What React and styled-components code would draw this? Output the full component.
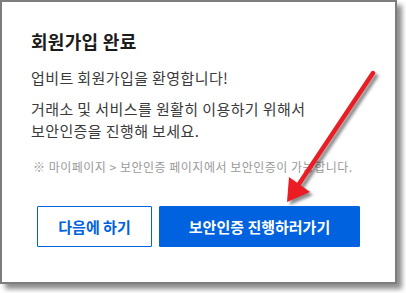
import styled, { createGlobalStyle } from 'styled-components';

const GlobalStyle = createGlobalStyle`
  html, body {
    margin: 0;
    padding: 0;
    background: #fff;
  }
  body {
    font-family: "Noto Sans CJK KR", "Noto Sans", sans-serif;
  }
`;

const Page = styled.div`
  position: relative;
  width: 406px;
  height: 293px;
  overflow: hidden;
`;

const Dialog = styled.div`
  box-sizing: border-box;
  width: 397px;
  height: 284px;
  border: 2px solid #7d7d7d;
  background: #fff;
  box-shadow: 5px 5px 5px rgba(0, 0, 0, 0.45);
  padding: 26px 29px 0;
  display: flex;
  flex-direction: column;
`;

const Title = styled.h2`
  margin: 0;
  font-size: 18px;
  line-height: 26px;
  font-weight: 700;
  color: #1b1b1b;
  letter-spacing: 0.3px;
`;

const Text = styled.p`
  margin: ${(p) => p.$gap}px 0 0;
  font-size: 15px;
  line-height: 22px;
  color: #3a3a3a;
  letter-spacing: 0.4px;
`;

const Note = styled.p`
  margin: 16px 0 0 2px;
  font-size: 12px;
  line-height: 18px;
  color: #9a9a9a;
  letter-spacing: 0.5px;
  white-space: nowrap;
`;

const Buttons = styled.div`
  display: flex;
  justify-content: center;
  gap: 7px;
  margin-top: 30px;
`;

const Button = styled.button`
  box-sizing: border-box;
  width: ${(p) => p.$w}px;
  height: 41px;
  border: 1px solid #0062df;
  border-radius: 1px;
  background: ${(p) => (p.$primary ? '#0062df' : '#fff')};
  color: ${(p) => (p.$primary ? '#fff' : '#0062df')};
  font-family: inherit;
  font-size: 15px;
  font-weight: 700;
  letter-spacing: 0;
  padding: 0;
`;

const Arrow = styled.svg`
  position: absolute;
  left: 0;
  top: 0;
  filter: drop-shadow(3px 3px 1.5px rgba(0, 0, 0, 0.45));
`;

export default function App() {
  return (
    <Page>
      <GlobalStyle />
      <Dialog>
        <Title>회원가입 완료</Title>
        <Text $gap={13}>업비트 회원가입을 환영합니다!</Text>
        <Text $gap={9}>
          거래소 및 서비스를 원활히 이용하기 위해서
          <br />
          보안인증을 진행해 보세요.
        </Text>
        <Note>※ 마이페이지 &gt; 보안인증 페이지에서 보안인증이 가능합니다.</Note>
        <Buttons>
          <Button $w={115}>다음에 하기</Button>
          <Button $w={201} $primary>보안인증 진행하러가기</Button>
        </Buttons>
      </Dialog>
      <Arrow width="406" height="293" viewBox="0 0 406 293">
        <line x1="373" y1="73" x2="299" y2="184" stroke="#ec1c24" strokeWidth="4.5" strokeLinecap="round" />
        <polygon points="287,202 289,177 310,192" fill="#ec1c24" />
      </Arrow>
    </Page>
  );
}
